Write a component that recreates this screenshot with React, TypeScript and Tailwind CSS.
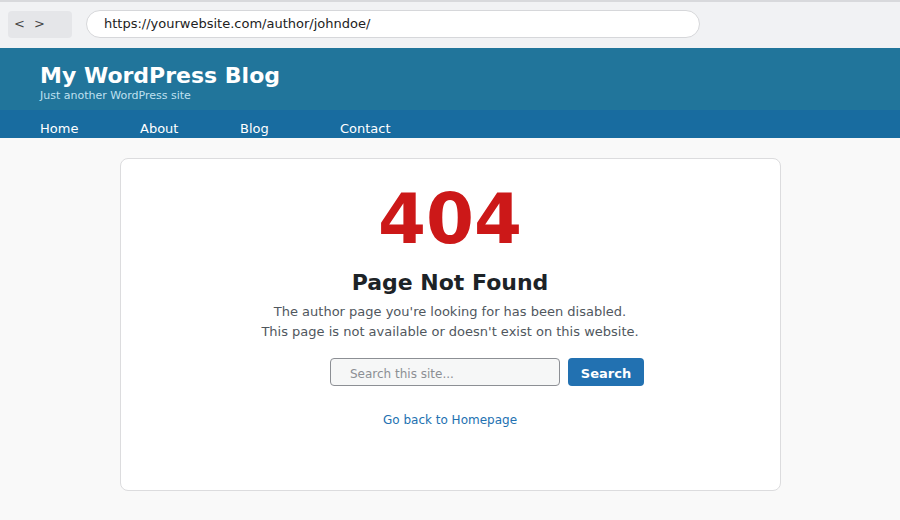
export default function App() {
  return (
    <div className="w-[900px] h-[520px] bg-[#f9f9f9] font-['DejaVu_Sans',sans-serif] overflow-hidden">
      <div className="h-[48px] bg-[#f1f2f4] border-t-2 border-[#d8d9dc] flex items-center gap-[14px] px-[8px] pb-[2px]">
        <div className="w-[64px] h-[27px] bg-[#e5e6e9] rounded flex items-center px-[6px] gap-[9px] text-[13px] text-[#444]">
          <span>&lt;</span>
          <span>&gt;</span>
        </div>
        <div className="w-[614px] h-[28px] bg-white border border-[#d6d7da] rounded-full flex items-center px-[17px] text-[13px] text-[#222]">
          https://yourwebsite.com/author/johndoe/
        </div>
      </div>

      <header className="bg-[#21759b] h-[62px] px-[40px] pt-[15px]">
        <h1 className="text-[22px] leading-[26px] font-bold text-white">My WordPress Blog</h1>
        <p className="mt-[1px] text-[11px] leading-[12px] text-[#bfe0f0]">Just another WordPress site</p>
      </header>
      <nav className="bg-[#186ca0] h-[28px] px-[40px] flex items-center text-[13px] text-white">
        <a className="w-[100px] pt-[10px]">Home</a>
        <a className="w-[100px] pt-[10px]">About</a>
        <a className="w-[100px] pt-[10px]">Blog</a>
        <a className="w-[100px] pt-[10px]">Contact</a>
      </nav>

      <main className="pt-[20px] flex justify-center">
        <div className="w-[661px] h-[333px] bg-white border border-[#dcdcde] rounded-lg flex flex-col items-center pt-[24px]">
          <div className="text-[69px] leading-[72px] font-bold text-[#cc1818]">404</div>
          <h2 className="mt-[14px] text-[22px] leading-[28px] font-bold text-[#1d2327]">Page Not Found</h2>
          <p className="mt-[5px] text-[13px] leading-[20px] text-[#50575e] text-center">
            The author page you're looking for has been disabled.
            <br />
            This page is not available or doesn't exist on this website.
          </p>
          <form className="mt-[16px] ml-[74px] flex gap-[8px]">
            <input
              type="text"
              placeholder="Search this site..."
              className="w-[230px] h-[28px] bg-[#f6f7f7] border border-[#8c8f94] rounded px-[19px] pt-[3px] text-[12px] text-[#333] placeholder:text-[#8c8f94] outline-none"
            />
            <button type="button" className="w-[76px] h-[28px] bg-[#2271b1] rounded pt-[3px] text-[13px] font-bold text-white">
              Search
            </button>
          </form>
          <a className="mt-[25px] text-[12px] text-[#2271b1]">Go back to Homepage</a>
        </div>
      </main>
    </div>
  )
}
